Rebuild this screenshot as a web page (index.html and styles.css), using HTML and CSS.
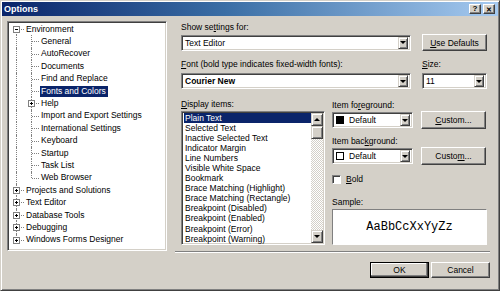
FILE: index.html
```html
<!DOCTYPE html>
<html lang="en">
<head>
    <meta charset="UTF-8">
    <title>Options</title>
    <link rel="stylesheet" href="styles.css">
</head>
<body>
    <div class="window">
        <div class="titlebar">
            <span class="title">Options</span>
            <div class="caption-buttons">
                <span class="cbtn">?</span>
                <span class="cbtn close">&#x2715;</span>
            </div>
        </div>

        <div class="content">
            <div class="main">
                <div class="tree">
                    <div class="row"><span class="ln first"><i class="box minus"></i></span><span class="label">Environment</span></div>
                    <div class="row"><span class="ln pass"></span><span class="ln"></span><span class="label">General</span></div>
                    <div class="row"><span class="ln pass"></span><span class="ln"></span><span class="label">AutoRecover</span></div>
                    <div class="row"><span class="ln pass"></span><span class="ln"></span><span class="label">Documents</span></div>
                    <div class="row"><span class="ln pass"></span><span class="ln"></span><span class="label">Find and Replace</span></div>
                    <div class="row"><span class="ln pass"></span><span class="ln"></span><span class="label selected">Fonts and Colors</span></div>
                    <div class="row"><span class="ln pass"></span><span class="ln"><i class="box plus"></i></span><span class="label">Help</span></div>
                    <div class="row"><span class="ln pass"></span><span class="ln"></span><span class="label">Import and Export Settings</span></div>
                    <div class="row"><span class="ln pass"></span><span class="ln"></span><span class="label">International Settings</span></div>
                    <div class="row"><span class="ln pass"></span><span class="ln"></span><span class="label">Keyboard</span></div>
                    <div class="row"><span class="ln pass"></span><span class="ln"></span><span class="label">Startup</span></div>
                    <div class="row"><span class="ln pass"></span><span class="ln"></span><span class="label">Task List</span></div>
                    <div class="row"><span class="ln pass"></span><span class="ln last"></span><span class="label">Web Browser</span></div>
                    <div class="row"><span class="ln"><i class="box plus"></i></span><span class="label">Projects and Solutions</span></div>
                    <div class="row"><span class="ln"><i class="box plus"></i></span><span class="label">Text Editor</span></div>
                    <div class="row"><span class="ln"><i class="box plus"></i></span><span class="label">Database Tools</span></div>
                    <div class="row"><span class="ln"><i class="box plus"></i></span><span class="label">Debugging</span></div>
                    <div class="row"><span class="ln last"><i class="box plus"></i></span><span class="label">Windows Forms Designer</span></div>
                </div>

                <div class="settings">
                    <div class="caption first-caption">Show se<u>t</u>tings for:</div>
                    <div class="line">
                        <div class="combo wide"><span class="value">Text Editor</span><span class="drop"></span></div>
                        <button class="btn side"><u>U</u>se Defaults</button>
                    </div>

                    <div class="captions">
                        <div class="caption font-caption"><u>F</u>ont (bold type indicates fixed-width fonts):</div>
                        <div class="caption"><u>S</u>ize:</div>
                    </div>
                    <div class="line">
                        <div class="combo wide"><span class="value bold">Courier New</span><span class="drop"></span></div>
                        <div class="combo size"><span class="value">11</span><span class="drop"></span></div>
                    </div>

                    <div class="items">
                        <div class="items-left">
                            <div class="caption"><u>D</u>isplay items:</div>
                            <div class="listbox">
                                <div class="list-entries">
                                    <div class="entry selected">Plain Text</div>
                                    <div class="entry">Selected Text</div>
                                    <div class="entry">Inactive Selected Text</div>
                                    <div class="entry">Indicator Margin</div>
                                    <div class="entry">Line Numbers</div>
                                    <div class="entry">Visible White Space</div>
                                    <div class="entry">Bookmark</div>
                                    <div class="entry">Brace Matching (Highlight)</div>
                                    <div class="entry">Brace Matching (Rectangle)</div>
                                    <div class="entry">Breakpoint (Disabled)</div>
                                    <div class="entry">Breakpoint (Enabled)</div>
                                    <div class="entry">Breakpoint (Error)</div>
                                    <div class="entry">Breakpoint (Warning)</div>
                                </div>
                                <div class="scrollbar">
                                    <span class="sbtn up"></span>
                                    <span class="thumb"></span>
                                    <span class="track"></span>
                                    <span class="sbtn down"></span>
                                </div>
                            </div>
                        </div>

                        <div class="items-right">
                            <div class="caption fg-caption">Item fo<u>r</u>eground:</div>
                            <div class="line color-line">
                                <div class="combo color"><span class="swatch black"></span><span class="value">Default</span><span class="drop"></span></div>
                                <button class="btn side custom"><u>C</u>ustom...</button>
                            </div>
                            <div class="caption bg-caption">Item bac<u>k</u>ground:</div>
                            <div class="line color-line">
                                <div class="combo color"><span class="swatch white"></span><span class="value">Default</span><span class="drop"></span></div>
                                <button class="btn side custom">Custo<u>m</u>...</button>
                            </div>
                            <label class="check"><span class="checkbox"></span><span><u>B</u>old</span></label>
                            <div class="caption sample-caption">Sample:</div>
                            <div class="sample">AaBbCcXxYyZz</div>
                        </div>
                    </div>
                </div>
            </div>

            <div class="separator"></div>

            <div class="footer">
                <button class="btn default">OK</button>
                <button class="btn">Cancel</button>
            </div>
        </div>
    </div>
</body>
</html>
```

FILE: styles.css
```css
* {
    margin: 0;
    padding: 0;
    box-sizing: border-box;
}

body {
    width: 500px;
    height: 291px;
    font-family: 'Liberation Sans', Arial, sans-serif;
    font-size: 8.5px;
    color: #000;
    background: #d4d0c8;
    overflow: hidden;
}

u {
    text-decoration: underline;
    text-underline-offset: 1px;
}

.window {
    width: 500px;
    height: 291px;
    display: flex;
    flex-direction: column;
    background: #d4d0c8;
    border: 1px solid;
    border-color: #d4d0c8 #404040 #404040 #d4d0c8;
    box-shadow: inset 1px 1px #fff, inset -1px -1px #808080;
    padding: 1px;
}

/* title bar */
.titlebar {
    height: 14px;
    display: flex;
    align-items: center;
    justify-content: space-between;
    padding: 0 3px 0 2px;
    background: linear-gradient(90deg, #0a246a 0%, #3a6ea5 45%, #a6caf0 100%);
}

.title {
    color: #fff;
    font-weight: bold;
    font-size: 9px;
}

.caption-buttons {
    display: flex;
    gap: 2px;
}

.cbtn {
    width: 12px;
    height: 10px;
    display: flex;
    align-items: center;
    justify-content: center;
    font-size: 8px;
    font-weight: bold;
    line-height: 1;
    background: #d4d0c8;
    border: 1px solid;
    border-color: #fff #404040 #404040 #fff;
    box-shadow: inset -1px -1px #808080;
}

.cbtn.close {
    font-size: 7px;
}

/* main area */
.content {
    flex: 1;
    display: flex;
    flex-direction: column;
    padding: 0 8px 0 5px;
}

.main {
    display: flex;
    height: 235px;
}

.tree {
    width: 160px;
    height: 230px;
    margin-top: 5px;
    background: #fff;
    border: 1px solid;
    border-color: #808080 #fff #fff #808080;
    box-shadow: inset 1px 1px #404040, inset -1px -1px #d4d0c8;
    padding: 1px 0 0 1px;
    overflow: hidden;
}

.row {
    height: 12.4px;
    display: flex;
    align-items: center;
}

.ln {
    position: relative;
    width: 15px;
    height: 100%;
    flex: none;
}

.ln::before {
    content: "";
    position: absolute;
    left: 7px;
    top: 0;
    bottom: 0;
    border-left: 1px dotted #808080;
}

.ln::after {
    content: "";
    position: absolute;
    left: 8px;
    width: 7px;
    top: 6px;
    border-top: 1px dotted #808080;
}

.ln.first::before {
    top: 6px;
}

.ln.last::before {
    bottom: auto;
    height: 6px;
}

.ln.pass::after {
    display: none;
}

.box {
    position: absolute;
    left: 4px;
    top: 3px;
    width: 7px;
    height: 7px;
    background: #fff;
    border: 1px solid #808080;
    z-index: 1;
}

.box::before {
    content: "";
    position: absolute;
    left: 1px;
    top: 2px;
    width: 3px;
    height: 1px;
    background: #000;
}

.box.plus::after {
    content: "";
    position: absolute;
    left: 2px;
    top: 1px;
    width: 1px;
    height: 3px;
    background: #000;
}

.label {
    padding: 0 2px;
    line-height: 11px;
    white-space: nowrap;
}

.label.selected {
    background: #0a246a;
    color: #fff;
    margin-left: 1px;
    padding-left: 1px;
}

/* settings */
.settings {
    width: 307px;
    margin-left: 14px;
    display: flex;
    flex-direction: column;
}

.caption {
    line-height: 10px;
    white-space: nowrap;
}

.first-caption {
    margin-top: 6px;
    margin-bottom: 2px;
}

.line {
    display: flex;
    align-items: center;
    justify-content: space-between;
}

.captions {
    display: flex;
    margin-top: 8px;
    margin-bottom: 4px;
}

.font-caption {
    width: 241px;
}

.combo {
    height: 16px;
    display: flex;
    align-items: center;
    background: #fff;
    border: 1px solid;
    border-color: #808080 #fff #fff #808080;
    box-shadow: inset 1px 1px #404040, inset -1px -1px #d4d0c8;
    padding: 2px 2px 2px 3px;
}

.combo.wide {
    width: 230px;
}

.combo.size {
    width: 65px;
    margin-right: 1px;
}

.combo.color {
    width: 81px;
}

.value {
    flex: 1;
    white-space: nowrap;
}

.value.bold {
    font-weight: bold;
}

.drop {
    width: 10px;
    height: 12px;
    flex: none;
    display: flex;
    align-items: center;
    justify-content: center;
    background: #d4d0c8;
    border: 1px solid;
    border-color: #d4d0c8 #404040 #404040 #d4d0c8;
    box-shadow: inset 1px 1px #fff, inset -1px -1px #808080;
}

.drop::before {
    content: "";
    border-left: 3px solid transparent;
    border-right: 3px solid transparent;
    border-top: 3px solid #000;
}

.btn {
    height: 17px;
    font-family: inherit;
    font-size: 8.5px;
    color: #000;
    background: #d4d0c8;
    border: 1px solid;
    border-color: #fff #404040 #404040 #fff;
    box-shadow: inset -1px -1px #808080;
}

.btn.side {
    width: 65px;
    margin-right: 1px;
}

/* display items */
.items {
    display: flex;
    gap: 7px;
    margin-top: 10px;
}

.items-left {
    width: 144px;
    display: flex;
    flex-direction: column;
}

.listbox {
    margin-top: 2px;
    height: 134px;
    display: flex;
    background: #fff;
    border: 1px solid;
    border-color: #808080 #fff #fff #808080;
    box-shadow: inset 1px 1px #404040, inset -1px -1px #d4d0c8;
    padding: 1px 1px 0 2px;
}

.list-entries {
    flex: 1;
    overflow: hidden;
}

.entry {
    height: 10.05px;
    line-height: 10px;
    padding-left: 1px;
    white-space: nowrap;
}

.entry.selected {
    background: #0a246a;
    color: #fff;
}

.scrollbar {
    width: 12px;
    display: flex;
    flex-direction: column;
    padding-bottom: 1px;
}

.sbtn, .thumb {
    height: 13px;
    flex: none;
    display: flex;
    align-items: center;
    justify-content: center;
    background: #d4d0c8;
    border: 1px solid;
    border-color: #d4d0c8 #404040 #404040 #d4d0c8;
    box-shadow: inset 1px 1px #fff, inset -1px -1px #808080;
}

.sbtn.up::before {
    content: "";
    border-left: 3px solid transparent;
    border-right: 3px solid transparent;
    border-bottom: 3px solid #000;
}

.sbtn.down::before {
    content: "";
    border-left: 3px solid transparent;
    border-right: 3px solid transparent;
    border-top: 3px solid #000;
}

.track {
    flex: 1;
    background: repeating-conic-gradient(#fff 0 25%, #d4d0c8 0 50%) 0 0 / 2px 2px;
}

.items-right {
    width: 155px;
    display: flex;
    flex-direction: column;
}

.fg-caption {
    margin-top: 1px;
}

.color-line {
    height: 18px;
    margin-top: 1px;
}

.custom {
    height: 18px;
}

.bg-caption {
    margin-top: 7px;
}

.swatch {
    width: 8px;
    height: 8px;
    flex: none;
    margin-right: 5px;
}

.swatch.black {
    background: #000;
}

.swatch.white {
    background: #fff;
    border: 1px solid #000;
}

.check {
    display: flex;
    align-items: center;
    gap: 5px;
    margin-top: 9px;
    line-height: 10px;
}

.checkbox {
    width: 9px;
    height: 9px;
    background: #fff;
    border: 1px solid;
    border-color: #808080 #fff #fff #808080;
    box-shadow: inset 1px 1px #404040;
}

.sample-caption {
    margin-top: 13px;
}

.sample {
    margin-top: 2px;
    height: 36px;
    display: flex;
    align-items: center;
    justify-content: center;
    background: #fff;
    border: 1px solid;
    border-color: #808080 #fff #fff #808080;
    font-family: 'Liberation Mono', 'Courier New', monospace;
    font-size: 12px;
}

/* bottom */
.separator {
    margin-left: 168px;
    height: 2px;
    border-top: 1px solid #808080;
    border-bottom: 1px solid #fff;
}

.footer {
    display: flex;
    justify-content: flex-end;
    gap: 2px;
    margin-top: 9px;
}

.footer .btn {
    width: 59px;
    height: 16px;
}

.footer .btn.default {
    outline: 1px solid #000;
    outline-offset: -1px;
    box-shadow: inset -1px -1px #404040, inset -2px -2px #808080, inset 1px 1px #fff;
}
```
